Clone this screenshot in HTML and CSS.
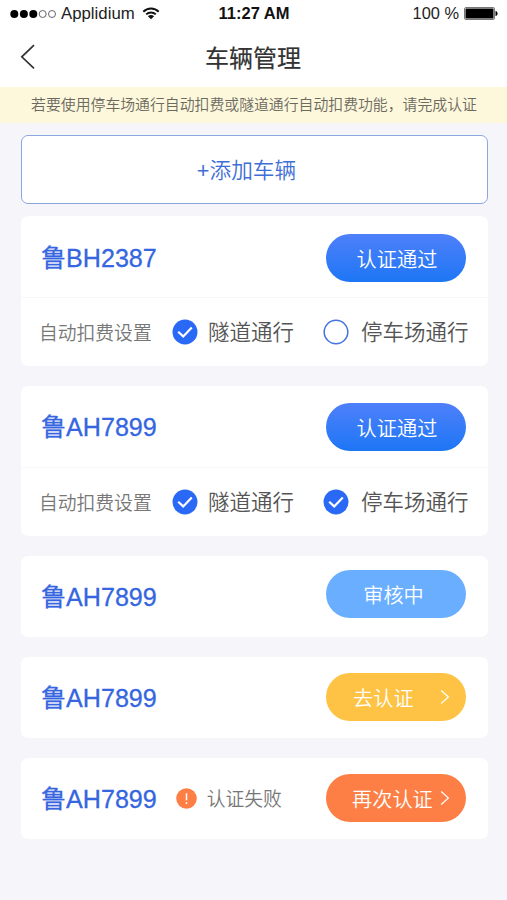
FILE: index.html
```html
<!DOCTYPE html>
<html lang="zh-CN">
<head>
<meta charset="UTF-8" />
<meta name="viewport" content="width=device-width, initial-scale=1.0" />
<title>车辆管理</title>
<link rel="stylesheet" href="styles.css">
</head>
<body>

<div class="status-bar">
<div class="status-left">
<svg class="signal" width="47" height="10" viewBox="0 0 47 10">
<circle cx="4.3" cy="5" r="4" />
<circle cx="13.9" cy="5" r="4" />
<circle cx="23.3" cy="5" r="4" />
<circle class="empty" cx="32.7" cy="5" r="3.5" />
<circle class="empty" cx="42" cy="5" r="3.5" />
</svg>
<span class="carrier">Applidium</span>
<svg class="wifi" width="18" height="13" viewBox="0 0 18 13">
<path d="M1.3 4.7 C5.5 0.4 12.5 0.4 16.7 4.7" />
<path d="M4.2 7.4 C6.8 4.8 11.2 4.8 13.8 7.4" />
<path class="dot" d="M5.9 9.3 C7.6 7.7 10.4 7.7 12.1 9.3 L9 12.3 Z" />
</svg>
</div>
<div class="status-time">11:27 AM</div>
<div class="status-right">
<span>100 %</span>
<svg width="34" height="13" viewBox="0 0 34 13">
<rect x="0.5" y="0.5" width="30" height="12" rx="1.5" fill="#fff" stroke="#777" />
<rect x="1.5" y="1.5" width="28" height="10" rx="0.5" />
<path d="M31.5 4 C34.3 4.6 34.3 8.4 31.5 9 Z" />
</svg>
</div>
</div>

<header class="navbar">
<svg class="back" width="16" height="26" viewBox="0 0 16 26"><path d="M14 1.2 L1.8 12.8 L14 24.4" /></svg>
<h1>车辆管理</h1>
</header>

<div class="notice">若要使用停车场通行自动扣费或隧道通行自动扣费功能，请完成认证</div>

<main class="content">
<button class="add-btn">+添加车辆</button>

<section class="card">
<div class="card-head low">
<span class="plate">鲁BH2387</span>
<button class="pill passed">认证通过</button>
</div>
<div class="card-options">
<span class="label">自动扣费设置</span>
<span class="option tunnel">
<svg class="check" width="26" height="26" viewBox="0 0 26 26"><circle cx="13" cy="13" r="12.5" /><path d="M6.2 12.7 L11.2 17.4 L19.8 8.6" /></svg>
<span>隧道通行</span>
</span>
<span class="option">
<svg class="check off" width="26" height="26" viewBox="0 0 26 26"><circle cx="13" cy="13" r="11.8" /></svg>
<span>停车场通行</span>
</span>
</div>
</section>

<section class="card">
<div class="card-head">
<span class="plate">鲁AH7899</span>
<button class="pill passed">认证通过</button>
</div>
<div class="card-options">
<span class="label">自动扣费设置</span>
<span class="option tunnel">
<svg class="check" width="26" height="26" viewBox="0 0 26 26"><circle cx="13" cy="13" r="12.5" /><path d="M6.2 12.7 L11.2 17.4 L19.8 8.6" /></svg>
<span>隧道通行</span>
</span>
<span class="option">
<svg class="check" width="26" height="26" viewBox="0 0 26 26"><circle cx="13" cy="13" r="12.5" /><path d="M6.2 12.7 L11.2 17.4 L19.8 8.6" /></svg>
<span>停车场通行</span>
</span>
</div>
</section>

<section class="card">
<div class="card-head high">
<span class="plate">鲁AH7899</span>
<button class="pill pending">审核中</button>
</div>
</section>

<section class="card">
<div class="card-head">
<span class="plate">鲁AH7899</span>
<button class="pill todo">去认证
<svg class="arrow" width="10" height="16" viewBox="0 0 10 16"><path d="M1.2 1.5 L8.4 8 L1.2 14.5" /></svg>
</button>
</div>
</section>

<section class="card">
<div class="card-head">
<span class="plate">鲁AH7899</span>
<span class="fail">
<svg width="21" height="21" viewBox="0 0 21 21"><circle cx="10.5" cy="10.5" r="10.3" fill="#fd7f45" /><path d="M10.5 5.2 V12.2 M10.5 14.2 V16" stroke="#fff" stroke-width="1.5" /></svg>
<span>认证失败</span>
</span>
<button class="pill retry">再次认证
<svg class="arrow" width="10" height="16" viewBox="0 0 10 16"><path d="M1.2 1.5 L8.4 8 L1.2 14.5" /></svg>
</button>
</div>
</section>
</main>

</body>
</html>
```
FILE: styles.css
```css
* { box-sizing: border-box; }

body {
margin: 0;
min-height: 900px;
font-family: "Liberation Sans", "Noto Sans CJK SC", sans-serif;
background: #f5f5fa;
color: #333;
}

button {
font-family: inherit;
padding: 0;
cursor: pointer;
}

svg { display: block; flex: none; }

/* status bar */
.status-bar {
display: grid; grid-template-columns: 1fr auto 1fr;
align-items: center;
height: 27px; padding: 0 9px 0 10px;
background: #fff; color: #222;
font-size: 16px;
}

.status-left, .status-right {
display: flex; align-items: center;
}

.signal .empty { fill: none; stroke: #555; stroke-width: 0.9; }
.carrier { margin: 0 7px 0 4px; font-size: 16.8px; }

.wifi path { fill: none; stroke: #111; stroke-width: 2; }
.wifi .dot { fill: #111; stroke: none; }

.status-time { font-size: 16.5px; font-weight: bold; color: #111; }
.status-right { justify-content: flex-end; gap: 5px; font-size: 16.4px; }

/* title */
.navbar {
display: flex; align-items: center;
height: 60px; padding: 0 20px;
background: #fff;
}

.back path { fill: none; stroke: #333; stroke-width: 1.7; }

.navbar h1 {
flex: 1; margin: 0 17px 0 0; padding-top: 3px;
text-align: center;
font-size: 24px; font-weight: normal; line-height: 57px;
-webkit-text-stroke: 0.2px #333;
}

.notice {
height: 36px; line-height: 37px;
background: #fdf8dc; color: #6c6a5f;
font-size: 14.87px; font-weight: 350; text-align: center; white-space: nowrap;
padding-left: 1px;
}

/* vehicles */
.content {
display: flex; flex-direction: column; gap: 20px;
padding: 12px 19px 0 21px;
}

.add-btn {
height: 69px; margin-bottom: -8px;
padding: 0 16px 3px 0;
background: #fff; color: #3f6fd6;
border: 1.5px solid #8ba6e0; border-radius: 7px;
font-size: 21.7px; font-weight: 350;
}

.card {
background: #fff; border-radius: 7px;
}

.card-head {
display: flex; align-items: flex-start;
height: 81px; padding: 16px 22px 0 20px;
}

.card-head.low { padding-top: 18px; }
.card-head.high { padding-top: 14px; }
.card-head.low .plate { margin-top: -1px; }
.card-head.high .plate { margin-top: 2px; }

.plate {
line-height: 50px;
font-size: 25.1px; color: #3566e0;
-webkit-text-stroke: 0.3px #3566e0;
}

.pill {
display: flex; align-items: center; justify-content: center;
width: 140px; height: 48px; margin-left: auto;
border: none; border-radius: 24px;
font-size: 20.2px; font-weight: 350; color: #fff;
}

.passed { background: linear-gradient(#4f80fa, #1d76f5); padding-left: 2px; }
.pending { background: #6aaeff; padding-right: 5px; }
.todo { background: #fec344; justify-content: space-between; padding: 0 16px 0 27px; }
.retry { background: #fd7f45; justify-content: space-between; padding: 0 16px 0 26px; }

.card + .card .passed { margin-top: 1px; }

.arrow path { fill: none; stroke: #fff; stroke-width: 1.2; }

.card-options {
display: flex; align-items: center;
height: 69px; padding: 0 0 0 18px;
border-top: 1px solid #f7f7f9;
font-weight: 350; white-space: nowrap;
}

.label { width: 133px; padding-bottom: 2px; font-size: 18.8px; color: #777; }

.option {
display: flex; align-items: center; gap: 10px;
font-size: 21.5px; color: #555;
}

.option span { padding-bottom: 3px; }
.option:last-child { gap: 12px; }

.tunnel { width: 151px; }

.check circle { fill: #2a69f6; }
.check path { fill: none; stroke: #fff; stroke-width: 2.2; }
.check.off circle { fill: #fff; stroke: #4373dc; stroke-width: 1.5; }

.fail {
display: flex; align-items: center; gap: 10px;
height: 48px; margin-left: 19px;
font-size: 18.8px; font-weight: 350; color: #777;
}

.fail span { padding-bottom: 2px; }
```
